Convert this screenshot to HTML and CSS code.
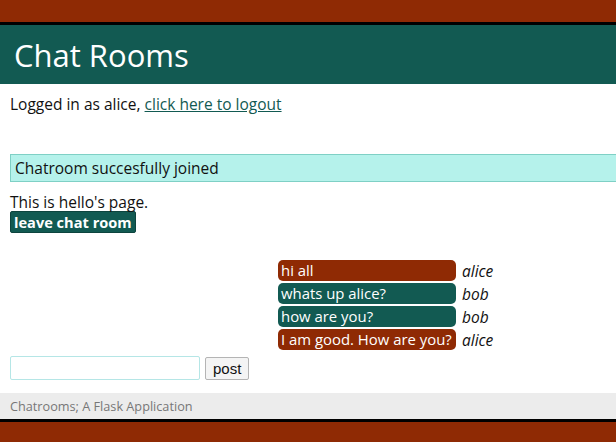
FILE: index.html
```html
<!DOCTYPE html>
<html>
<head>
<meta charset="utf-8">
<title>Chat Rooms</title>
<link rel="stylesheet" href="styles.css">
</head>
<body>
<div class="topbar"></div>
<header class="header"><h1 class="title">Chat Rooms</h1></header>
<main class="content">
  <p class="login">Logged in as alice, <a href="#" class="logout">click here to logout</a></p>
  <div class="flash">Chatroom succesfully joined</div>
  <p class="room">This is hello's page.</p>
  <button class="leave">leave chat room</button>
  <div class="messages">
    <div class="msg"><span class="bubble alice">hi all</span><span class="who">alice</span></div>
    <div class="msg"><span class="bubble bob">whats up alice?</span><span class="who">bob</span></div>
    <div class="msg"><span class="bubble bob">how are you?</span><span class="who">bob</span></div>
    <div class="msg"><span class="bubble alice">I am good. How are you?</span><span class="who">alice</span></div>
  </div>
  <form class="postform">
    <input class="field" type="text">
    <button class="post" type="button">post</button>
  </form>
</main>
<footer class="footer">Chatrooms; A Flask Application</footer>
<div class="bottombar"></div>
</body>
</html>
```
FILE: styles.css
```css
html, body {
  margin: 0;
  padding: 0;
  overflow: hidden;
  background: #fff;
  font-family: "Open Sans", "DejaVu Sans", sans-serif;
  font-size: 15.5px;
  color: #111;
}
.topbar {
  height: 22px;
  background: #8f2a04;
  border-bottom: 3px solid #000;
}
.header {
  height: 59px;
  background: #125a52;
  display: flex;
  align-items: center;
}
.title {
  margin: 0 0 0 14px;
  font-weight: normal;
  font-size: 31px;
  color: #fff;
}
.content {
  padding: 0 10px;
}
.login {
  margin: 0;
  padding-top: 11px;
  line-height: 18px;
}
.logout {
  color: #125a52;
}
.flash {
  margin: 41px -10px 0 0;
  height: 26px;
  line-height: 26px;
  padding: 0 4px;
  background: #b5f2eb;
  border: 1px solid #7fd0c5;
  border-right: none;
  white-space: nowrap;
}
.room {
  margin: 11px 0 0;
  line-height: 18px;
}
.leave {
  display: block;
  margin: 0;
  height: 22px;
  padding: 0 3px;
  border: 1px solid #0d443e;
  border-radius: 2px;
  background: #125a52;
  color: #fff;
  font-family: inherit;
  font-size: 14.6px;
  font-weight: bold;
  line-height: 20px;
}
.messages {
  margin-top: 27px;
  padding-left: 268px;
  display: flex;
  flex-direction: column;
  gap: 2px;
}
.msg {
  display: flex;
  align-items: center;
  gap: 6px;
  height: 21px;
}
.bubble {
  width: 178px;
  height: 21px;
  line-height: 21px;
  box-sizing: border-box;
  padding: 0 3px;
  border-radius: 5px;
  color: #fff;
  font-size: 14.9px;
  white-space: nowrap;
  overflow: hidden;
}
.bubble.alice { background: #8f2a04; }
.bubble.bob { background: #125a52; }
.who {
  font-style: italic;
}
.postform {
  margin: 6px 0 0;
  display: flex;
  align-items: center;
  gap: 5px;
}
.field {
  box-sizing: border-box;
  width: 190px;
  height: 24px;
  border: 1px solid #b5e6e6;
  border-radius: 2px;
}
.post {
  height: 23px;
  padding: 0 7px;
  background: #f4f4f4;
  border: 1px solid #b4b4b4;
  border-radius: 2px;
  font-family: "Liberation Sans", Arial, sans-serif;
  font-size: 15px;
  color: #111;
}
.footer {
  margin-top: 13px;
  height: 26px;
  line-height: 26px;
  padding-left: 10px;
  background: #ececec;
  color: #777;
  font-size: 12.7px;
  border-bottom: 3px solid #000;
}
.bottombar {
  height: 30px;
  background: #8f2a04;
}
```
